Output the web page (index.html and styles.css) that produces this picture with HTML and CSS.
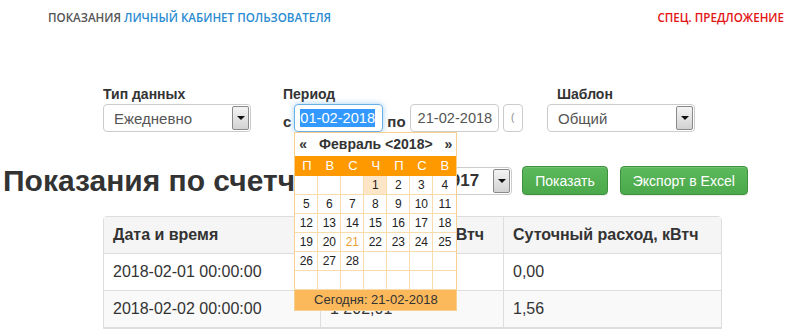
FILE: index.html
```html
<!DOCTYPE html>
<html lang="ru">
<head>
    <meta charset="UTF-8">
    <title>Показания</title>
    <link rel="stylesheet" href="styles.css">
</head>
<body>

    <!-- Top bar -->
    <div class="topbar">
        <div class="topbar-left">
            <span class="brand">Показания</span>
            <a href="#" class="cabinet">Личный кабинет пользователя</a>
        </div>
        <a href="#" class="promo">Спец. предложение</a>
    </div>

    <!-- Filters -->
    <div class="filters">
        <div class="filter-group group-type">
            <label>Тип данных</label>
            <div class="select">
                <span class="select-text">Ежедневно</span>
                <span class="select-arrow"></span>
            </div>
        </div>

        <div class="filter-group group-period">
            <label>Период</label>
            <div class="period-row">
                <span class="word">с</span>
                <div class="date-wrap">
                    <div class="input focused"><span class="selected">01-02-2018</span></div>

                    <!-- Date picker popup -->
                    <div class="calendar">
                        <div class="cal-head">
                            <span>«</span>
                            <span class="cal-title">Февраль &lt;2018&gt;</span>
                            <span>»</span>
                        </div>
                        <div class="cal-grid">
                            <div class="wd">П</div><div class="wd">В</div><div class="wd">С</div><div class="wd">Ч</div><div class="wd">П</div><div class="wd">С</div><div class="wd">В</div>
                            <div class="d"></div><div class="d"></div><div class="d"></div><div class="d picked">1</div><div class="d">2</div><div class="d">3</div><div class="d">4</div>
                            <div class="d">5</div><div class="d">6</div><div class="d">7</div><div class="d">8</div><div class="d">9</div><div class="d">10</div><div class="d">11</div>
                            <div class="d">12</div><div class="d">13</div><div class="d">14</div><div class="d">15</div><div class="d">16</div><div class="d">17</div><div class="d">18</div>
                            <div class="d">19</div><div class="d">20</div><div class="d today">21</div><div class="d">22</div><div class="d">23</div><div class="d">24</div><div class="d">25</div>
                            <div class="d">26</div><div class="d">27</div><div class="d">28</div><div class="d"></div><div class="d"></div><div class="d"></div><div class="d"></div>
                            <div class="d"></div><div class="d"></div><div class="d"></div><div class="d"></div><div class="d"></div><div class="d"></div><div class="d"></div>
                        </div>
                        <div class="cal-foot">Сегодня: 21-02-2018</div>
                    </div>
                </div>
                <span class="word">по</span>
                <div class="input">21-02-2018</div>
                <div class="input mini"><span>(</span></div>
            </div>
        </div>

        <div class="filter-group group-template">
            <label>Шаблон</label>
            <div class="select">
                <span class="select-text">Общий</span>
                <span class="select-arrow"></span>
            </div>
        </div>
    </div>

    <!-- Title row -->
    <div class="title-row">
        <h1>Показания по счетчику</h1>
        <div class="select meter">
            <span class="select-text">№ 0010917</span>
            <span class="select-arrow"></span>
        </div>
        <button class="btn">Показать</button>
        <button class="btn btn-wide">Экспорт в Excel</button>
    </div>

    <!-- Readings table -->
    <table class="readings">
        <thead>
            <tr>
                <th class="col-date">Дата и время</th>
                <th class="col-value">Показания (Т), кВтч</th>
                <th class="col-day">Суточный расход, кВтч</th>
            </tr>
        </thead>
        <tbody>
            <tr>
                <td>2018-02-01 00:00:00</td>
                <td>1 200,45</td>
                <td>0,00</td>
            </tr>
            <tr>
                <td>2018-02-02 00:00:00</td>
                <td>1 202,01</td>
                <td>1,56</td>
            </tr>
        </tbody>
    </table>

</body>
</html>
```

FILE: styles.css
```css
* {
    box-sizing: border-box;
    margin: 0;
    padding: 0;
}
body {
    font-family: "Liberation Sans", Arial, sans-serif;
    color: #333;
    background-color: #fff;
    overflow: hidden;
}

/* Top bar */
.topbar {
    display: flex;
    justify-content: space-between;
    height: 84px;
    padding: 9px 3px 0 48px;
    font-family: "Open Sans", sans-serif;
    font-weight: 600;
    font-size: 11.6px;
    line-height: 18px;
    text-transform: uppercase;
}
.topbar a {
    text-decoration: none;
}
.brand {
    color: #555;
}
.cabinet {
    color: #2a8bd1;
}
.promo {
    color: #e31414;
}

/* Filters */
.filters {
    display: flex;
    padding-left: 103px;
}
.filter-group label {
    display: block;
    font-size: 14px;
    font-weight: bold;
    line-height: 20px;
}
.group-type {
    width: 180px;
}
.group-period {
    width: 264px;
}
.group-template label {
    padding-left: 10px;
}
.select {
    display: flex;
    align-items: center;
    justify-content: space-between;
    width: 148px;
    height: 28px;
    padding: 0 1px 0 10px;
    border: 1px solid #ccc;
    border-radius: 4px;
    background-color: #fff;
    color: #555;
    font-size: 15px;
    white-space: nowrap;
}
.select-arrow {
    position: relative;
    flex-shrink: 0;
    width: 17px;
    height: 24px;
    border: 1px solid #8a8a8a;
    border-radius: 2px;
    background: linear-gradient(#f4f4f4, #d2d2d2);
}
.select-arrow::after {
    content: "";
    position: absolute;
    left: 4px;
    top: 9px;
    border-left: 4px solid transparent;
    border-right: 4px solid transparent;
    border-top: 4px solid #111;
}
.period-row {
    display: flex;
    align-items: center;
}
.word {
    font-size: 15px;
    font-weight: bold;
    margin-top: 6px;
}
.date-wrap {
    position: relative;
    margin: 0 4px 0 3px;
}
.input {
    width: 89px;
    height: 28px;
    padding: 0 5px;
    border: 1px solid #ccc;
    border-radius: 4px;
    color: #555;
    font-size: 14.6px;
    line-height: 26px;
    white-space: nowrap;
    overflow: hidden;
}
.period-row > .input {
    margin-left: 4px;
    padding-left: 7px;
}
.input.focused {
    border-color: #66afe9;
    box-shadow: 0 0 6px rgba(102, 175, 233, 0.6);
}
.selected {
    background-color: #3399ff;
    color: #fff;
    padding: 1px 0;
}
.input.mini {
    width: 20px;
    padding: 0;
    text-align: center;
    font-size: 10px;
    color: #888;
}

/* Date picker */
.calendar {
    position: absolute;
    top: 28px;
    left: 0;
    z-index: 5;
    width: 163px;
    background-color: #fff;
    border: 1px solid #f7cf8e;
    font-size: 12px;
}
.cal-head {
    display: flex;
    justify-content: space-between;
    height: 23px;
    padding: 0 4px;
    font-size: 14px;
    font-weight: bold;
    line-height: 22px;
}
.cal-grid {
    display: grid;
    grid-template-columns: repeat(7, 23px);
}
.wd {
    height: 20px;
    background-color: #ff9900;
    color: #fff;
    text-align: center;
    font-size: 13px;
    line-height: 20px;
}
.d {
    height: 19px;
    border-right: 1px solid #f8dcae;
    border-bottom: 1px solid #f8dcae;
    text-align: center;
    line-height: 18px;
    color: #222;
}
.d:nth-child(7n) {
    border-right: none;
}
.d.picked {
    background-color: #fde6c8;
}
.d.today {
    color: #e8a034;
}
.cal-foot {
    height: 20px;
    background-color: #fcb95b;
    text-align: center;
    font-size: 13px;
    line-height: 20px;
}

/* Title row */
.title-row {
    display: flex;
    align-items: center;
    padding: 34px 0 0 3px;
    height: 63px;
}
h1 {
    font-size: 30px;
    line-height: 34px;
    font-weight: bold;
    color: #333;
    white-space: nowrap;
}
.select.meter {
    width: 157px;
    margin-left: 10px;
    justify-content: flex-end;
    font-size: 17px;
    font-weight: bold;
    color: #333;
}
.meter .select-text {
    margin-right: 14px;
}
.btn {
    height: 29px;
    margin-left: 10px;
    padding: 0 12px;
    border: 1px solid #3e8f3e;
    border-radius: 4px;
    background: linear-gradient(#5cb85c, #4aa94a);
    color: #fff;
    font-family: "Liberation Sans", Arial, sans-serif;
    font-size: 14px;
    box-shadow: inset 0 1px 0 rgba(255, 255, 255, 0.15), 0 1px 1px rgba(0, 0, 0, 0.075);
}
.btn-wide {
    margin-left: 12px;
}

/* Readings table */
.readings {
    margin: 21px 0 0 103px;
    width: 619px;
    border-collapse: separate;
    border-spacing: 0;
    border: 1px solid #ddd;
    border-radius: 4px 4px 0 0;
    font-size: 16px;
}
.readings th,
.readings td {
    height: 37px;
    padding: 0 9px;
    text-align: left;
    border-right: 1px solid #ddd;
    border-bottom: 1px solid #ddd;
}
.readings th:last-child,
.readings td:last-child {
    border-right: none;
}
.readings th {
    background-color: #f5f5f5;
    font-weight: bold;
}
.readings tbody tr:nth-child(even) td {
    background-color: #f9f9f9;
}
.col-date {
    width: 217px;
}
.col-value {
    width: 183px;
}
```
